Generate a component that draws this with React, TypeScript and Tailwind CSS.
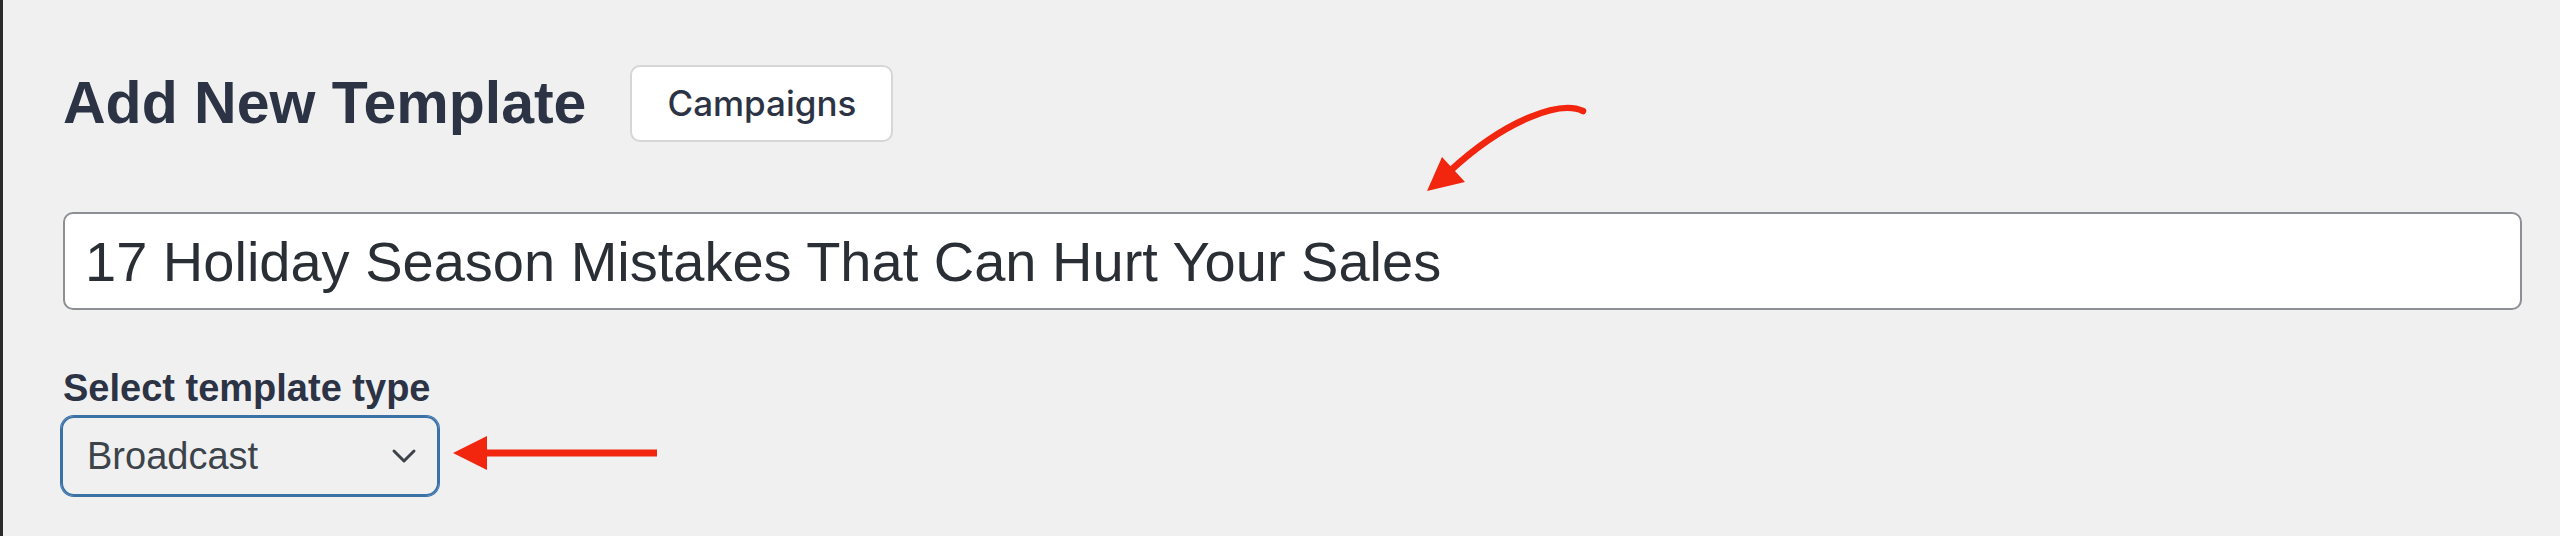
import { ChevronDown } from 'lucide-react';

const sans = "font-['Liberation_Sans',Arial,sans-serif]";

export default function App() {
  return (
    <div className="relative h-[536px] w-[2560px] overflow-hidden border-l-[3px] border-[#2b2b2b] bg-[#f0f0f0]">
      <div className="pl-[60px] pr-[38px] pt-[65px]">
        <div className="flex h-[77px] items-center gap-[44px]">
          <h1 className={`${sans} text-[59px] font-bold leading-none text-[#2c3344]`}>
            Add New Template
          </h1>
          <button className="flex h-[77px] w-[263px] items-center justify-center rounded-[10px] border-2 border-[#d6d6d6] bg-white font-['Inter',sans-serif] text-[35px] font-medium text-[#2c3344]">
            Campaigns
          </button>
        </div>

        <input
          readOnly
          value="17 Holiday Season Mistakes That Can Hurt Your Sales"
          className={`${sans} mt-[70px] block h-[98px] w-full rounded-[10px] border-2 border-[#8c8f94] bg-white px-[20px] text-[56px] text-[#2a2f35] outline-none`}
        />

        <label className={`${sans} mt-[56px] block text-[38px] font-bold leading-[44px] text-[#2c3344]`}>
          Select template type
        </label>
        <div className="mt-[6px] ml-[-2px] flex h-[80px] w-[378px] items-center justify-between rounded-[13px] border-2 border-[#3a72a8] pl-[24px] pr-[13px] shadow-[0_0_0_1px_#3a72a8]">
          <span className={`${sans} text-[38px] text-[#3c434a]`}>Broadcast</span>
          <ChevronDown size={40} strokeWidth={1.8} className="text-[#3c434a]" />
        </div>
      </div>

      {/* annotation arrows */}
      <svg className="pointer-events-none absolute left-[-3px] top-0" width="2560" height="536" viewBox="0 0 2560 536">
        <path d="M1583 111 C1560 100 1505 120 1450 171" fill="none" stroke="#f2260e" strokeWidth="6.5" strokeLinecap="round" />
        <polygon points="1427,191 1442,157 1465,182" fill="#f2260e" />
        <line x1="484" y1="453" x2="657" y2="453" stroke="#f2260e" strokeWidth="7" />
        <polygon points="453,453 487,436 487,470" fill="#f2260e" />
      </svg>
    </div>
  );
}
